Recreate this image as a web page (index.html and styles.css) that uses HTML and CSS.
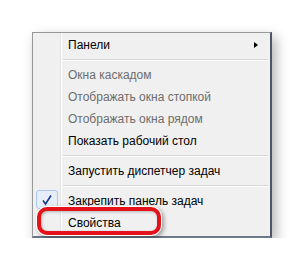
FILE: index.html
```html
<!DOCTYPE html>
<html>
<head>
<meta charset="utf-8">
<link rel="stylesheet" href="styles.css">
</head>
<body>
<div class="stage">
  <div class="menu">
    <div class="item sub">Панели<span class="arrow"></span></div>
    <div class="sep"></div>
    <div class="item off">Окна каскадом</div>
    <div class="item off">Отображать окна стопкой</div>
    <div class="item off">Отображать окна рядом</div>
    <div class="item">Показать рабочий стол</div>
    <div class="sep"></div>
    <div class="item">Запустить диспетчер задач</div>
    <div class="sep"></div>
    <div class="item checked"><span class="check"><svg width="12" height="12" viewBox="0 0 12 12"><path d="M2 6.5 L4.5 10 L10 1.5" fill="none" stroke="#1a3c8c" stroke-width="1.6"/></svg></span>Закрепить панель задач</div>
    <div class="item">Свойства</div>
    <div class="ring"></div>
  </div>
</div>
</body>
</html>
```
FILE: styles.css
```css
html, body {
  margin: 0;
  background: #ffffff;
}
.stage {
  padding: 32px 0 0 32px;
}
.menu {
  position: relative;
  width: 235px;
  box-sizing: content-box;
  padding: 1px 1px 2px 1px;
  background-color: #f0f0f0;
  background-image: linear-gradient(to right, transparent 27px, #e2e3e3 27px, #e2e3e3 28px, #ffffff 28px, #ffffff 29px, transparent 29px);
  border: 1px solid #979797;
  border-right: 2px solid #4f5566;
  border-bottom: 2px solid #6c7888;
  box-shadow: 4px 5px 12px rgba(0, 0, 0, 0.3);
  font-family: "Liberation Sans", Arial, sans-serif;
  font-size: 12px;
  color: #000;
}
.item {
  position: relative;
  height: 22px;
  line-height: 22px;
  padding-left: 34px;
  white-space: nowrap;
}
.item.off {
  color: #6d6d6d;
}
.arrow {
  position: absolute;
  right: 11px;
  top: 8px;
  width: 0;
  height: 0;
  border-top: 3.5px solid transparent;
  border-bottom: 3.5px solid transparent;
  border-left: 4px solid #000;
}
.sep {
  height: 8px;
  margin-left: 29px;
  margin-right: 1px;
  background: linear-gradient(to bottom, transparent 3px, #d7d7d7 3px, #d7d7d7 4px, #ffffff 4px, #ffffff 5px, transparent 5px);
}
.check {
  position: absolute;
  left: 2px;
  top: 0;
  width: 20px;
  height: 17px;
  border: 1px solid #a9c7ee;
  border-radius: 3px;
  background: #e6eef9;
  display: flex;
  align-items: center;
  justify-content: center;
}
.ring {
  position: absolute;
  left: 4px;
  top: 174px;
  width: 116px;
  height: 20px;
  border: 4px solid #e3121b;
  border-radius: 10px;
  box-shadow: 0 0 0 1px #ffffff, 2px 2px 4px 1px rgba(0, 0, 0, 0.35), inset 1px 1px 3px rgba(0, 0, 0, 0.25);
}
```
